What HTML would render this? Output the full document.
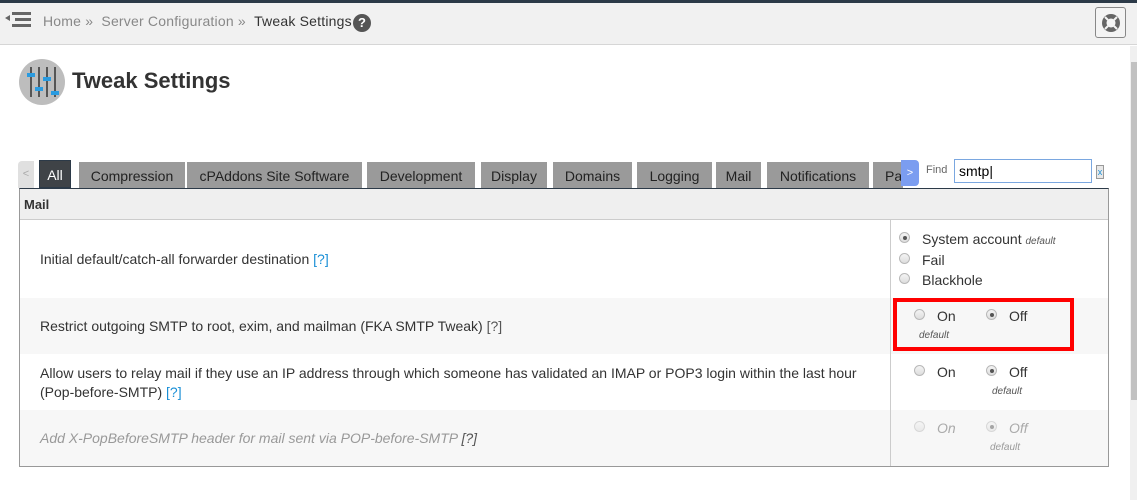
<!DOCTYPE html>
<html><head><style>
*{box-sizing:border-box;margin:0;padding:0}
body{width:1137px;height:500px;background:#fff;font-family:"Liberation Sans",sans-serif;font-size:14px;color:#333;position:relative;overflow:hidden}
.abs{position:absolute}
.top{left:0;top:0;width:1137px;height:3px;background:#2c3a48}
.hdr{left:0;top:3px;width:1137px;height:42px;background:#f1f1f1;border-bottom:1px solid #d6d6d6}
.tab{position:absolute;top:162px;height:26px;background:#9a9a9a;color:#222;font-size:14px;line-height:28px;text-align:center;white-space:nowrap;overflow:hidden}
.radio{position:absolute;width:11px;height:11px;border-radius:50%;border:1px solid #b8b8b8;background:linear-gradient(#f4f4f4,#ddd)}
.radio.on::after{content:"";position:absolute;left:3px;top:3px;width:4px;height:4px;border-radius:50%;background:#555}
.lbl{position:absolute;font-size:14px;color:#333}
.def{position:absolute;font-size:10px;font-style:italic;color:#555}
.row{position:absolute;left:20px;width:1088px}
.txt{position:absolute;left:20px;font-size:14px;color:#333;line-height:19px}
a{color:#1a8fd6;text-decoration:none}
</style></head><body>
<div class="abs top"></div>
<div class="abs hdr"></div>
<svg class="abs" style="left:5px;top:11px" width="26" height="20"><polygon points="0,7 5,4 5,10" fill="#666"/><rect x="7" y="1" width="21" height="3" fill="#666"/><rect x="10" y="7" width="18" height="3" fill="#666"/><rect x="7" y="13" width="21" height="3" fill="#666"/></svg>
<div class="abs" style="left:43px;top:13px;font-size:14px;letter-spacing:0.2px;color:#888;white-space:nowrap">Home » &nbsp;Server Configuration » &nbsp;<span style="color:#333">Tweak Settings</span></div>
<div class="abs" style="left:353px;top:14px;width:18px;height:18px;border-radius:50%;background:#555;color:#fff;font-weight:bold;font-size:13px;line-height:18px;text-align:center">?</div>
<div class="abs" style="left:1095px;top:7px;width:31px;height:31px;border:1px solid #888;border-radius:3px;background:#f4f4f4"></div>
<svg class="abs" style="left:1101px;top:13px" width="20" height="20"><circle cx="10" cy="10" r="9" fill="#666"/><circle cx="10" cy="10" r="4.5" fill="#f4f4f4"/><path d="M4 4L7 7M16 4L13 7M4 16L7 13M16 16L13 13" stroke="#f4f4f4" stroke-width="2"/></svg>
<div class="abs" style="left:1130px;top:46px;width:7px;height:454px;background:#f0f0f0"></div>
<div class="abs" style="left:1131px;top:62px;width:6px;height:338px;background:#c1c1c1"></div>

<div class="abs" style="left:19px;top:59px;width:46px;height:46px;border-radius:50%;background:#bdbdbd"></div>
<svg class="abs" style="left:19px;top:59px" width="46" height="46"><g stroke="#555" stroke-width="2"><path d="M12 8V38M20 8V38M28 8V38M36 8V38"/></g><g fill="#2a9be0"><rect x="8" y="14" width="8" height="4"/><rect x="16" y="28" width="8" height="4"/><rect x="24" y="18" width="8" height="4"/><rect x="32" y="32" width="8" height="4"/></g></svg>
<div class="abs" style="left:72px;top:68px;font-size:22px;font-weight:bold;color:#333">Tweak Settings</div>

<div class="abs" style="left:18px;top:161px;width:16px;height:27px;background:#e0e0e0;border-radius:4px 0 0 0;color:#aaa;font-size:11px;line-height:27px;text-align:center">&lt;</div>
<div class="tab" style="left:39px;width:32px;background:#3f4347;color:#fff;top:160px;height:28px;border:1px solid #2c3a48">All</div>
<div class="tab" style="left:79px;width:106px">Compression</div>
<div class="tab" style="left:187px;width:175px">cPAddons Site Software</div>
<div class="tab" style="left:367px;width:108px">Development</div>
<div class="tab" style="left:481px;width:66px">Display</div>
<div class="tab" style="left:553px;width:79px">Domains</div>
<div class="tab" style="left:637px;width:75px">Logging</div>
<div class="tab" style="left:716px;width:45px">Mail</div>
<div class="tab" style="left:767px;width:102px">Notifications</div>
<div class="tab" style="left:873px;width:30px;text-align:left;padding-left:12px">Pa</div>
<div class="abs" style="left:901px;top:160px;width:18px;height:26px;background:#7b9df0;border-radius:0 4px 4px 0;color:#fff;font-size:11px;line-height:26px;text-align:center">&gt;</div>
<div class="abs" style="left:926px;top:164px;font-size:11px;color:#666">Find</div>
<div class="abs" style="left:954px;top:159px;width:138px;height:24px;border:1px solid #7aa7e0;background:#fff;font-size:14px;line-height:22px;padding-left:4px;color:#000">smtp|</div>
<div class="abs" style="left:1096px;top:165px;width:8px;height:14px;border:1px solid #999;background:#e8e8e8;color:#1a8fd6;font-size:9px;line-height:12px;text-align:center">x</div>

<div class="abs" style="left:19px;top:188px;width:1090px;height:279px;border:1px solid #999;border-top:1px solid #2c3a48"></div>
<div class="row" style="top:189px;height:31px;background:#efefef;border-bottom:1px solid #ccc"><div style="position:absolute;left:4px;top:8px;font-weight:bold;font-size:13px">Mail</div></div>
<div class="row" style="top:298px;height:56px;background:#f7f7f7"></div>
<div class="row" style="top:410px;height:56px;background:#f7f7f7"></div>
<div class="abs" style="left:890px;top:220px;width:1px;height:246px;background:#ccc"></div>

<div class="txt" style="top:250px;left:40px">Initial default/catch-all forwarder destination <a>[?]</a></div>
<div class="radio on" style="left:899px;top:232px"></div><div class="lbl" style="left:922px;top:231px">System account <span style="font-size:10px;font-style:italic;color:#555">default</span></div>
<div class="radio" style="left:899px;top:253px"></div><div class="lbl" style="left:922px;top:252px">Fail</div>
<div class="radio" style="left:899px;top:273px"></div><div class="lbl" style="left:922px;top:272px">Blackhole</div>

<div class="txt" style="top:317px;left:40px">Restrict outgoing SMTP to root, exim, and mailman (FKA SMTP Tweak) <a style="color:#555">[?]</a></div>
<div class="abs" style="left:893px;top:298px;width:181px;height:53px;border:4px solid #f00"></div>
<div class="radio" style="left:914px;top:309px"></div><div class="lbl" style="left:937px;top:308px">On</div>
<div class="radio on" style="left:986px;top:309px"></div><div class="lbl" style="left:1009px;top:308px">Off</div>
<div class="def" style="left:919px;top:330px">default</div>

<div class="txt" style="top:364px;left:40px;width:830px">Allow users to relay mail if they use an IP address through which someone has validated an IMAP or POP3 login within the last hour (Pop-before-SMTP) <a>[?]</a></div>
<div class="radio" style="left:914px;top:365px"></div><div class="lbl" style="left:937px;top:364px">On</div>
<div class="radio on" style="left:986px;top:365px"></div><div class="lbl" style="left:1009px;top:364px">Off</div>
<div class="def" style="left:992px;top:386px">default</div>

<div class="txt" style="top:429px;left:40px;font-style:italic;color:#999">Add X-PopBeforeSMTP header for mail sent via POP-before-SMTP <a style="color:#555">[?]</a></div>
<div class="radio" style="left:914px;top:421px;opacity:.5"></div><div class="lbl" style="left:937px;top:420px;font-style:italic;color:#aaa">On</div>
<div class="radio on" style="left:986px;top:421px;opacity:.5"></div><div class="lbl" style="left:1009px;top:420px;font-style:italic;color:#aaa">Off</div>
<div class="def" style="left:990px;top:442px;color:#999">default</div>
</body></html>
